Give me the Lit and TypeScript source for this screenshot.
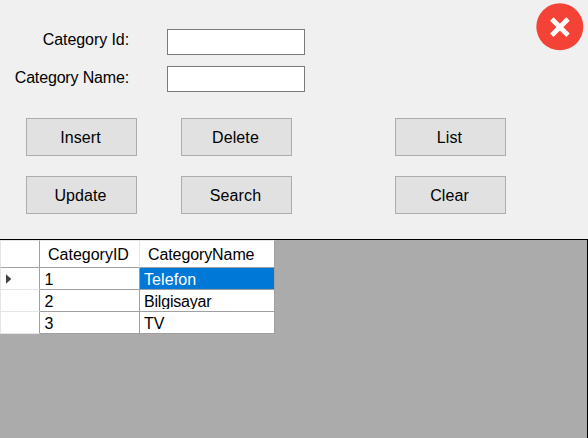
import { LitElement, html, css } from "lit";
import { customElement, state } from "lit/decorators.js";
import { classMap } from "lit/directives/class-map.js";

interface Category {
  id: number;
  name: string;
}

@customElement("app-root")
export class AppRoot extends LitElement {
  static styles = css`
    :host {
      display: flex;
      flex-direction: column;
      position: relative;
      width: 588px;
      height: 438px;
      overflow: hidden;
      box-sizing: border-box;
      background: #f0f0f0;
      color: #000;
      font: 16px/18px "Liberation Sans", Arial, sans-serif;
    }
    * {
      box-sizing: border-box;
    }
    .fields {
      display: grid;
      grid-template-columns: 129px 138px;
      grid-auto-rows: 26px;
      column-gap: 38px;
      row-gap: 11px;
      padding-top: 29px;
    }
    .fields label {
      justify-self: end;
      padding-top: 2px;
      white-space: nowrap;
      letter-spacing: -0.08px;
    }
    .fields label.name {
      padding-top: 3px;
      letter-spacing: -0.16px;
    }
    .fields input {
      width: 138px;
      height: 26px;
      margin: 0;
      padding: 2px 3px;
      border: 1px solid #7a7a7a;
      border-radius: 0;
      background: #fff;
      font: inherit;
      outline: none;
    }
    .buttons {
      display: grid;
      grid-template-columns: 155px 214px 111px;
      grid-auto-rows: 38px;
      row-gap: 20px;
      padding: 26px 0 25px 26px;
    }
    .buttons button {
      width: 111px;
      height: 38px;
      margin: 0;
      padding: 2px 2px 0 0;
      border: 1px solid #adadad;
      border-radius: 0;
      background: #e1e1e1;
      color: #000;
      font: inherit;
      letter-spacing: 0.1px;
    }
    .close {
      position: absolute;
      left: 536px;
      top: 3px;
      width: 48px;
      height: 48px;
    }
    .grid {
      flex: 1;
      border-top: 1px solid #000;
      border-right: 1px solid #000;
      background: #ababab;
    }
    .row {
      display: grid;
      grid-template-columns: 40px 100px 135px;
      width: 275px;
      height: 22px;
    }
    .row.head {
      height: 28px;
    }
    .cell {
      background: #fff;
      border-right: 1px solid #a0a0a0;
      border-bottom: 1px solid #a0a0a0;
      padding: 3px 0 0 4px;
      white-space: nowrap;
      overflow: hidden;
    }
    .head .cell {
      padding: 5px 0 0 8px;
      border-top: 1px solid #e5e5e5;
      border-right-color: #e5e5e5;
      letter-spacing: -0.1px;
    }
    .head .cell:first-child {
      border-left: 1px solid #e5e5e5;
      border-right-color: #a0a0a0;
    }
    .head .cell:nth-child(2) {
      letter-spacing: 0;
    }
    .head .cell:last-child {
      border-right-color: #a0a0a0;
    }
    .marker {
      border-bottom-color: #e5e5e5;
      border-left: 1px solid #e5e5e5;
    }
    .value {
      height: 16px;
      overflow: hidden;
    }
    .number {
      padding-left: 4.5px;
    }
    .long {
      letter-spacing: -0.2px;
    }
    .selected {
      background: #0078d7;
      color: #fff;
      letter-spacing: 0.1px;
    }
    .marker svg {
      display: block;
      margin: 3px 0 0 1px;
    }
  `;

  @state() private rows: Category[] = [
    { id: 1, name: "Telefon" },
    { id: 2, name: "Bilgisayar" },
    { id: 3, name: "TV" },
  ];

  @state() private current = 0;

  private actions = ["Insert", "Delete", "List", "Update", "Search", "Clear"];

  render() {
    return html`
      <div class="fields">
        <label for="cid">Category Id:</label><input id="cid" />
        <label class="name" for="cname">Category Name:</label><input id="cname" />
      </div>
      <div class="buttons">
        ${this.actions.map((a) => html`<div><button>${a}</button></div>`)}
      </div>
      <svg class="close" viewBox="0 0 48 48">
        <circle cx="23.8" cy="23.8" r="23.5" fill="#f44336" />
        <path d="M15.8 16 L32 32.2 M32 16 L15.8 32.2" stroke="#fff" stroke-width="4.8" />
      </svg>
      <div class="grid">
        <div class="row head">
          <div class="cell"></div>
          <div class="cell">CategoryID</div>
          <div class="cell">CategoryName</div>
        </div>
        ${this.rows.map(
          (r, i) => html`<div class="row">
            <div class="cell marker">
              ${i === this.current
                ? html`<svg width="6" height="10" viewBox="0 0 6 10"><path d="M0 0.2 L5.3 5 L0 9.8 Z" fill="#404040" /></svg>`
                : ""}
            </div>
            <div class="cell number">${r.id}</div>
            <div class=${classMap({ cell: true, selected: i === this.current, long: r.name.length > 8 })}>
              <div class="value">${r.name}</div>
            </div>
          </div>`
        )}
      </div>
    `;
  }
}
